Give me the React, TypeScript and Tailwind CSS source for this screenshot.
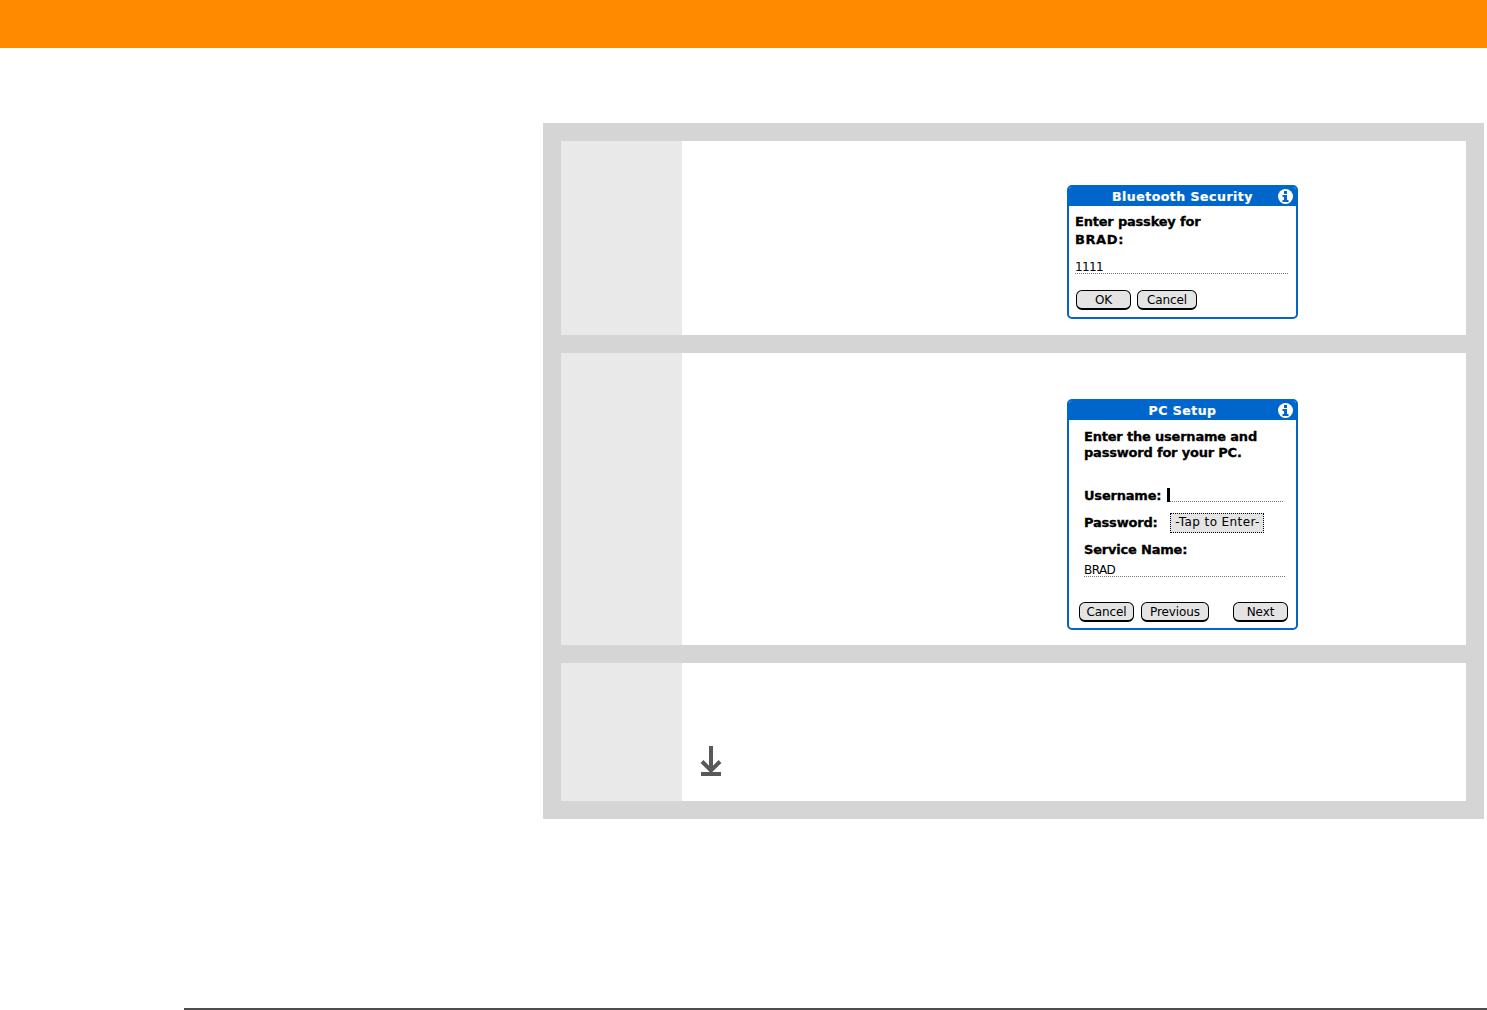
const titleFont = "font-['DejaVu_Sans'] font-bold";
const bodyFont = "font-['DejaVu_Sans']";
const labelText = "text-[13px] tracking-[-0.2px] text-black [-webkit-text-stroke:0.3px_#000]";

const InfoIcon = () => (
  <svg width="15" height="15" viewBox="0 0 15 15" className="shrink-0">
    <circle cx="7.5" cy="7.5" r="7.5" fill="#fff" />
    <rect x="6" y="2" width="3" height="3" fill="#0066cc" />
    <path d="M4.5 6h4.5v5h1.5v2h-6v-2h1.5V8H4.5z" fill="#0066cc" />
  </svg>
);

const PalmButton = ({label, width}: {label: string; width: string}) => (
  <div className={`${width} h-[20px] flex items-center justify-center rounded-[6px] border border-black border-b-2 bg-[#e4e4e4] text-[12px] leading-none tracking-[-0.1px] text-black ${bodyFont}`}>
    {label}
  </div>
);

const DottedField = ({value, className}: {value?: string; className: string}) => (
  <div className={`${className} border-b border-dotted border-[#777] text-[12px] leading-[14px] tracking-[-0.6px] text-black ${bodyFont}`}>
    {value}
  </div>
);

const Dialog = ({title, className, children}: {title: string; className: string; children: React.ReactNode}) => (
  <div className={`${className} w-[231px] flex flex-col rounded-[5px] border-2 border-[#0066cc] bg-white overflow-hidden`}>
    <div className="h-[19px] shrink-0 flex items-center bg-[#0066cc] pl-[6px] pr-[3px]">
      <div className={`flex-1 pl-[12px] pt-[2px] text-center text-[12.5px] leading-none tracking-[0.5px] text-white [-webkit-text-stroke:0.2px_#fff] ${titleFont}`}>{title}</div>
      <InfoIcon />
    </div>
    {children}
  </div>
);

const StepRow = ({height, children}: {height: string; children: React.ReactNode}) => (
  <div className={`${height} flex`}>
    <div className="w-[121px] shrink-0 bg-[#e9e9e9]" />
    <div className="flex-1 bg-white">{children}</div>
  </div>
);

export default function App() {
  return (
    <div className="h-[1010px] flex flex-col bg-white overflow-hidden">
      <div className="h-[48px] shrink-0 bg-[#ff8a00]" />

      <div className="mt-[75px] ml-[543px] w-[941px] flex flex-col gap-[18px] bg-[#d5d5d5] p-[18px]">
        <StepRow height="h-[194px]">
          <Dialog title="Bluetooth Security" className="mt-[44px] ml-[385px] h-[134px]">
            <div className={`mt-[7px] ml-[6px] leading-[18px] ${labelText} ${titleFont}`}>
              <div>Enter passkey for</div>
              <div className="tracking-[0.6px]">BRAD:</div>
            </div>
            <DottedField value="1111" className="mt-[11px] ml-[6px] mr-[8px] h-[14px]" />
            <div className="mt-[16px] ml-[7px] flex gap-[6px]">
              <PalmButton label="OK" width="w-[55px]" />
              <PalmButton label="Cancel" width="w-[60px]" />
            </div>
          </Dialog>
        </StepRow>

        <StepRow height="h-[292px]">
          <Dialog title="PC Setup" className="mt-[46px] ml-[385px] h-[231px]">
            <div className={`mt-[9px] ml-[15px] leading-[16px] ${labelText} ${titleFont}`}>
              <div>Enter the username and</div>
              <div>password for your PC.</div>
            </div>
            <div className="mt-[27px] ml-[15px] flex items-end">
              <div className={`leading-[16px] ${labelText} ${titleFont}`}>Username:</div>
              <div className="ml-[6px] mb-[2px] w-[3px] h-[14px] bg-black" />
              <div className="mb-[2px] w-[113px] border-b border-dotted border-[#777]" />
            </div>
            <div className="mt-[9px] ml-[15px] flex items-center">
              <div className={`leading-[16px] ${labelText} ${titleFont}`}>Password:</div>
              <div className={`ml-[13px] w-[94px] h-[20px] pb-[2px] flex items-center justify-center border border-dotted border-black bg-[#e4e4e4] text-[12px] leading-none tracking-[0.4px] text-black ${bodyFont}`}>
                -Tap to Enter-
              </div>
            </div>
            <div className={`mt-[9px] ml-[15px] leading-[16px] ${labelText} ${titleFont}`}>Service Name:</div>
            <DottedField value="BRAD" className="mt-[4px] ml-[15px] mr-[11px] h-[15px] pt-[1px]" />
            <div className="mt-[25px] ml-[10px] mr-[8px] flex">
              <PalmButton label="Cancel" width="w-[55px]" />
              <div className="ml-[7px]">
                <PalmButton label="Previous" width="w-[68px]" />
              </div>
              <div className="ml-auto">
                <PalmButton label="Next" width="w-[55px]" />
              </div>
            </div>
          </Dialog>
        </StepRow>

        <StepRow height="h-[138px]">
          <div className="mt-[83px] ml-[18px]">
            <svg width="22" height="30" viewBox="0 0 22 30" className="text-[#595959]">
              <path d="M11 0v25M2 15.5l9 9 9-9" fill="none" stroke="currentColor" strokeWidth="4" />
              <rect x="1" y="26" width="20" height="4" fill="currentColor" />
            </svg>
          </div>
        </StepRow>
      </div>

      <div className="mt-auto ml-[184px] h-[2px] bg-[#4d4d4d]" />
    </div>
  );
}
